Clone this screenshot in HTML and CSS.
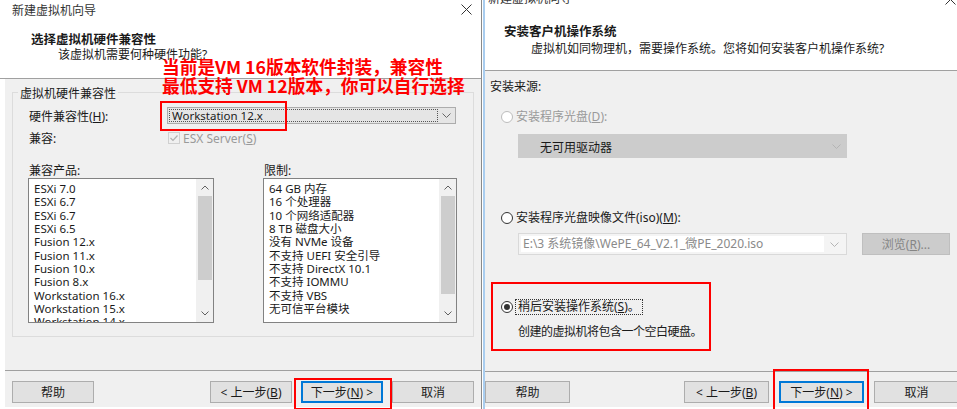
FILE: index.html
```html
<!DOCTYPE html>
<html lang="zh-CN">
<head>
    <meta charset="UTF-8">
    <title>新建虚拟机向导</title>
    <link rel="stylesheet" href="styles.css">
</head>
<body>
<div class="screen">
    <div class="dlg dlg-left">
        <div class="titlebar">
            <span>新建虚拟机向导</span>
            <svg class="close" width="11" height="11" viewBox="0 0 11 11"><path d="M0.5 0.5l10 10M10.5 0.5l-10 10" stroke="#333" fill="none"/></svg>
        </div>
        <div class="head">
            <div class="head-title">选择虚拟机硬件兼容性</div>
            <div class="head-sub">该虚拟机需要何种硬件功能?</div>
        </div>
        <div class="note">当前是VM 16版本软件封装，兼容性<br>最低支持 VM 12版本，你可以自行选择</div>
        <div class="body">
            <div class="group">
                <div class="legend">虚拟机硬件兼容性</div>
                <div class="row row-hw">
                    <span class="lbl">硬件兼容性(<u>H</u>):</span>
                    <div class="select">
                        <span class="focus">Workstation 12.x</span>
                        <svg width="9" height="5" viewBox="0 0 9 5"><path d="M0.5 0.5l4 4 4-4" fill="none" stroke="#666"/></svg>
                        <span class="mark-select"></span>
                    </div>
                </div>
                <div class="row row-compat">
                    <span class="lbl">兼容:</span>
                    <svg class="check" width="12" height="12" viewBox="0 0 12 12"><rect x="0.5" y="0.5" width="11" height="11" fill="#f0f0f0" stroke="#d0d0d0"/><path d="M2.5 6l2.5 2.5 4.5-5" fill="none" stroke="#b0b0b0" stroke-width="1.2"/></svg>
                    <span class="disabled">ESX Server(<u>S</u>)</span>
                </div>
                <div class="lists">
                    <div class="col col-prod">
                        <div class="list-lbl">兼容产品:</div>
                        <div class="listbox">
                            <div class="items">
                                <div>ESXi 7.0</div>
                                <div>ESXi 6.7</div>
                                <div>ESXi 6.7</div>
                                <div>ESXi 6.5</div>
                                <div>Fusion 12.x</div>
                                <div>Fusion 11.x</div>
                                <div>Fusion 10.x</div>
                                <div>Fusion 8.x</div>
                                <div>Workstation 16.x</div>
                                <div>Workstation 15.x</div>
                                <div>Workstation 14.x</div>
                            </div>
                            <div class="scroll">
                                <span class="arrow"><svg width="8" height="5" viewBox="0 0 8 5"><path d="M0.5 4.5l3.5-3.5 3.5 3.5" fill="none" stroke="#606060"/></svg></span>
                                <span class="thumb thumb-prod"></span>
                                <span class="arrow arrow-down"><svg width="8" height="5" viewBox="0 0 8 5"><path d="M0.5 0.5l3.5 3.5 3.5-3.5" fill="none" stroke="#606060"/></svg></span>
                            </div>
                        </div>
                    </div>
                    <div class="col col-limit">
                        <div class="list-lbl">限制:</div>
                        <div class="listbox">
                            <div class="items">
                                <div>64 GB 内存</div>
                                <div>16 个处理器</div>
                                <div>10 个网络适配器</div>
                                <div>8 TB 磁盘大小</div>
                                <div>没有 NVMe 设备</div>
                                <div>不支持 UEFI 安全引导</div>
                                <div>不支持 DirectX 10.1</div>
                                <div>不支持 IOMMU</div>
                                <div>不支持 VBS</div>
                                <div>无可信平台模块</div>
                            </div>
                            <div class="scroll">
                                <span class="arrow"><svg width="8" height="5" viewBox="0 0 8 5"><path d="M0.5 4.5l3.5-3.5 3.5 3.5" fill="none" stroke="#606060"/></svg></span>
                                <span class="thumb thumb-limit"></span>
                                <span class="arrow arrow-down"><svg width="8" height="5" viewBox="0 0 8 5"><path d="M0.5 0.5l3.5 3.5 3.5-3.5" fill="none" stroke="#606060"/></svg></span>
                            </div>
                        </div>
                    </div>
                </div>
            </div>
        </div>
        <div class="footer">
            <button class="btn btn-help">帮助</button>
            <button class="btn">&lt; 上一步(<u>B</u>)</button>
            <button class="btn btn-default mark-left">下一步(<u>N</u>) &gt;</button>
            <button class="btn">取消</button>
        </div>
    </div>

    <div class="dlg dlg-right">
        <div class="titlebar titlebar-cut">
            <span class="title">新建虚拟机向导</span>
            <svg class="close-cut" width="11" height="5" viewBox="0 0 11 5"><path d="M0.5 4.5l5-5 5 5" stroke="#333" fill="none"/></svg>
        </div>
        <div class="head head-right">
            <div class="head-title">安装客户机操作系统</div>
            <div class="head-sub">虚拟机如同物理机，需要操作系统。您将如何安装客户机操作系统?</div>
        </div>
        <div class="body body-right">
            <div class="src-lbl">安装来源:</div>
            <div class="opt opt-disc">
                <span class="radio radio-off"></span>
                <span class="disabled">安装程序光盘(<u>D</u>):</span>
            </div>
            <div class="drive">
                <span>无可用驱动器</span>
                <svg width="9" height="5" viewBox="0 0 9 5"><path d="M0.5 0.5l4 4 4-4" fill="none" stroke="#b4b4b4"/></svg>
            </div>
            <div class="opt opt-iso">
                <span class="radio"></span>
                <span>安装程序光盘映像文件(iso)(<u>M</u>):</span>
            </div>
            <div class="iso-row">
                <div class="combo">
                    <span class="combo-text">E:\3 系统镜像\WePE_64_V2.1_微PE_2020.iso</span>
                    <span class="combo-btn"><svg width="9" height="5" viewBox="0 0 9 5"><path d="M0.5 0.5l4 4 4-4" fill="none" stroke="#b4b4b4"/></svg></span>
                </div>
                <button class="btn btn-browse">浏览(<u>R</u>)...</button>
            </div>
            <div class="later">
                <div class="opt">
                    <span class="radio radio-on"></span>
                    <span class="focus-label">稍后安装操作系统(<u>S</u>)。</span>
                </div>
                <div class="later-desc">创建的虚拟机将包含一个空白硬盘。</div>
            </div>
        </div>
        <div class="footer footer-right">
            <button class="btn btn-wide btn-help">帮助</button>
            <button class="btn btn-wide">&lt; 上一步(<u>B</u>)</button>
            <button class="btn btn-wide btn-default mark-right">下一步(<u>N</u>) &gt;</button>
            <button class="btn btn-wide">取消</button>
        </div>
    </div>
</div>
</body>
</html>
```

FILE: styles.css
```css
* {
    box-sizing: border-box;
}
body {
    margin: 0;
    background: #fff;
    font-family: "Segoe UI", "Noto Sans", "Noto Sans CJK SC", sans-serif;
    font-size: 12px;
    color: #1a1a1a;
}
u {
    text-decoration: underline;
    text-underline-offset: 1px;
}
.screen {
    display: flex;
    width: 957px;
    height: 409px;
    overflow: hidden;
}
.dlg {
    flex: none;
    display: flex;
    flex-direction: column;
    background: #fff;
}
.dlg-left {
    width: 482px;
    border-right: 1px solid #8a8a8a;
    position: relative;
}
.dlg-right {
    width: 483px;
    margin-left: 1px;
    border-left: 2px solid #a9cdef;
}

/* title bar + header */
.titlebar {
    height: 21px;
    line-height: 21px;
    padding-left: 12px;
    color: #333;
    display: flex;
    justify-content: space-between;
}
.close {
    margin: 4px 9px 0 0;
}
.titlebar-cut {
    height: 9px;
    line-height: 12px;
    padding-left: 3px;
    overflow: hidden;
}
.titlebar-cut .title {
    display: block;
    margin-top: -7px;
}
.close-cut {
    margin-right: 10px;
}
.head {
    height: 58px;
    border-bottom: 1px solid #a0a0a0;
    padding-top: 11px;
}
.head-title {
    font-weight: bold;
    font-size: 12.5px;
    line-height: 16px;
    padding-left: 31px;
}
.head-sub {
    line-height: 14px;
    padding-left: 58px;
}
.head-right {
    height: 62px;
    padding-top: 15px;
}
.head-right .head-title {
    padding-left: 19px;
}
.head-right .head-sub {
    margin-top: 2px;
    padding-left: 46px;
}
.note {
    position: absolute;
    left: 162px;
    top: 57px;
    color: #fe0000;
    font-family: "Noto Sans CJK SC", sans-serif;
    font-weight: bold;
    font-size: 17.7px;
    line-height: 19px;
    white-space: nowrap;
}

/* left body */
.body {
    height: 291px;
    margin-left: 5px;
    background: #f0f0f0;
    padding-top: 13px;
}
.group {
    margin-left: 7px;
    width: 462px;
    height: 245px;
    border: 1px solid #dcdcdc;
    padding-left: 15px;
}
.legend {
    width: max-content;
    margin: -7px 0 0 -10px;
    padding: 0 2px;
    line-height: 16px;
    background: #f0f0f0;
}
.row {
    display: flex;
    align-items: center;
}
.row .lbl {
    width: 139px;
    padding-left: 1px;
}
.row-hw {
    height: 17px;
    margin-top: 5px;
}
.select {
    position: relative;
    width: 289px;
    height: 17px;
    background: #e5e5e5;
    border: 1px solid #acacac;
    display: flex;
    align-items: center;
    justify-content: space-between;
    padding: 0 4px 0 1px;
}
.focus {
    width: 269px;
    height: 13px;
    line-height: 11px;
    border: 1px dotted #555;
    padding-left: 2px;
    font-size: 11.5px;
}
.mark-select {
    position: absolute;
    left: -8px;
    top: -7px;
    width: 127px;
    height: 30px;
    border: 2px solid #fe0000;
}
.row-compat {
    height: 16px;
    margin-top: 6px;
}
.check {
    margin-left: 1px;
}
.disabled {
    color: #9a9a9a;
}
.row-compat .disabled {
    margin-left: 3px;
}
.lists {
    display: flex;
    gap: 49px;
    margin-top: 18px;
}
.col-prod {
    width: 186px;
}
.col-limit {
    width: 194px;
}
.list-lbl {
    line-height: 14px;
    padding-left: 1px;
}
.listbox {
    height: 145px;
    border: 1px solid #828282;
    background: #fff;
    display: flex;
}
.items {
    flex: 1;
    padding: 3px 0 0 5px;
    font-size: 11.5px;
    line-height: 13.33px;
    overflow: hidden;
    white-space: nowrap;
}
.scroll {
    width: 17px;
    background: #f0f0f0;
    display: flex;
    flex-direction: column;
}
.arrow {
    height: 17px;
    display: flex;
    align-items: center;
    justify-content: center;
}
.arrow-down {
    margin-top: auto;
}
.thumb {
    margin: 0 1px 0 2px;
    background: #cdcdcd;
}
.thumb-prod {
    height: 84px;
}
.thumb-limit {
    height: 98px;
}

/* footer */
.footer {
    height: 37px;
    margin-left: 5px;
    background: #f0f0f0;
    border-top: 1px solid #a0a0a0;
    display: flex;
    gap: 9px;
    padding: 10px 7px 0 7px;
}
.btn {
    width: 82px;
    height: 22px;
    background: #e1e1e1;
    border: 1px solid #adadad;
    font-family: inherit;
    font-size: 12px;
    color: #1a1a1a;
    padding: 0;
}
.btn-help {
    margin-right: auto;
}
.btn-default {
    position: relative;
    border-color: #0078d7;
    box-shadow: inset 0 0 0 1px #0078d7;
}
.mark-left::after,
.mark-right::after {
    content: "";
    position: absolute;
    border: 2px solid #fe0000;
}
.mark-left::after {
    left: -8px;
    top: -4px;
    width: 94px;
    height: 28px;
}
.mark-right::after {
    left: -7px;
    top: -13px;
    width: 92px;
    height: 38px;
}
.footer-right {
    margin-left: 0;
    height: 36px;
    gap: 10px;
    padding: 9px 7px 0 0;
}
.btn-wide {
    width: 85px;
}

/* right body */
.body-right {
    height: 300px;
    margin-left: 0;
    padding: 8px 0 0 5px;
}
.src-lbl {
    line-height: 16px;
}
.opt {
    display: flex;
    align-items: center;
    line-height: 16px;
}
.opt-disc {
    margin-top: 14px;
    padding-left: 11px;
}
.opt-iso {
    margin-top: 52px;
    padding-left: 11px;
}
.radio {
    width: 12px;
    height: 12px;
    border-radius: 50%;
    border: 1px solid #333;
    background: #fff;
    margin-right: 3px;
    display: flex;
    align-items: center;
    justify-content: center;
}
.radio-off {
    border-color: #bcbcbc;
}
.radio-on::after {
    content: "";
    width: 6px;
    height: 6px;
    border-radius: 50%;
    background: #333;
}
.drive {
    margin: 9px 0 0 28px;
    width: 329px;
    height: 24px;
    background: #cccccc;
    display: flex;
    align-items: center;
    justify-content: space-between;
    padding: 0 6px 0 22px;
    font-family: "Noto Sans CJK SC", sans-serif;
}
.iso-row {
    display: flex;
    margin: 7px 0 0 28px;
    gap: 15px;
}
.combo {
    width: 329px;
    height: 22px;
    border: 1px solid #d9d9d9;
    background: #f4f4f4;
    display: flex;
    padding: 2px;
}
.combo-text {
    flex: 1;
    background: #fff;
    color: #8a8a8a;
    line-height: 16px;
    padding-left: 2px;
    white-space: nowrap;
    overflow: hidden;
}
.combo-btn {
    width: 20px;
    display: flex;
    align-items: center;
    justify-content: center;
}
.btn-browse {
    width: 88px;
    background: #cccccc;
    border-color: #bfbfbf;
    color: #858585;
}
.later {
    margin: 27px 0 0 1px;
    width: 220px;
    border: 2px solid #fe0000;
    padding: 15px 0 9px 8px;
}
.focus-label {
    border: 1px dotted #333;
    padding: 0 2px;
    line-height: 14px;
    margin-left: -1px;
}
.later-desc {
    margin-top: 9px;
    padding-left: 17px;
    line-height: 16px;
    letter-spacing: -0.5px;
    white-space: nowrap;
}
```
